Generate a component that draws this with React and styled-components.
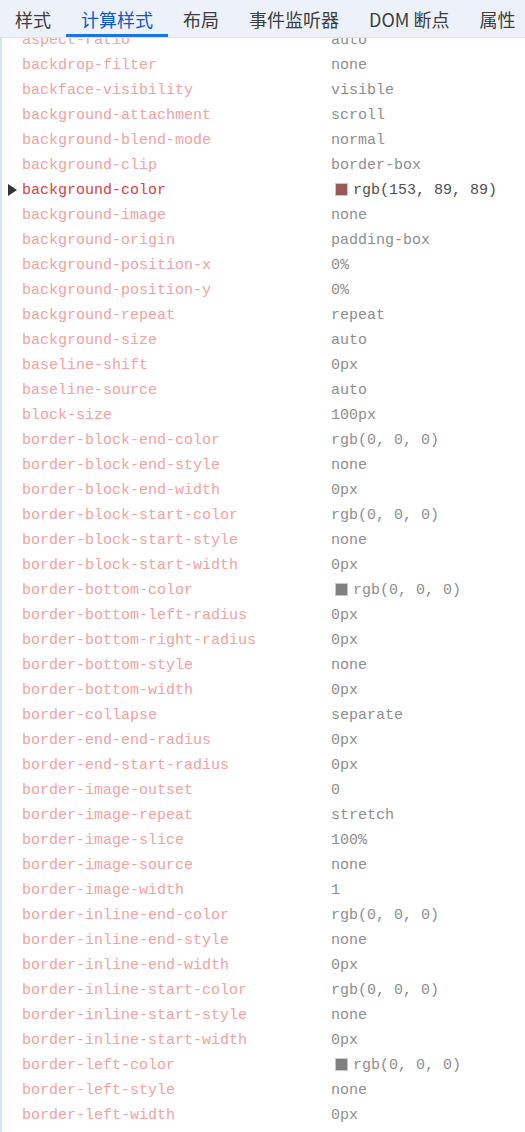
import React from 'react';
import styled, { createGlobalStyle } from 'styled-components';

const GlobalStyle = createGlobalStyle`
    html, body {
        margin: 0;
        padding: 0;
        background: #ffffff;
        overflow: hidden;
    }
`;

const tabs = ['样式', '计算样式', '布局', '事件监听器', 'DOM 断点', '属性'];

// [name, value, swatch color, expanded]
const props = [
    ['aspect-ratio', 'auto'],
    ['backdrop-filter', 'none'],
    ['backface-visibility', 'visible'],
    ['background-attachment', 'scroll'],
    ['background-blend-mode', 'normal'],
    ['background-clip', 'border-box'],
    ['background-color', 'rgb(153, 89, 89)', 'rgb(153, 89, 89)', true],
    ['background-image', 'none'],
    ['background-origin', 'padding-box'],
    ['background-position-x', '0%'],
    ['background-position-y', '0%'],
    ['background-repeat', 'repeat'],
    ['background-size', 'auto'],
    ['baseline-shift', '0px'],
    ['baseline-source', 'auto'],
    ['block-size', '100px'],
    ['border-block-end-color', 'rgb(0, 0, 0)'],
    ['border-block-end-style', 'none'],
    ['border-block-end-width', '0px'],
    ['border-block-start-color', 'rgb(0, 0, 0)'],
    ['border-block-start-style', 'none'],
    ['border-block-start-width', '0px'],
    ['border-bottom-color', 'rgb(0, 0, 0)', '#808080'],
    ['border-bottom-left-radius', '0px'],
    ['border-bottom-right-radius', '0px'],
    ['border-bottom-style', 'none'],
    ['border-bottom-width', '0px'],
    ['border-collapse', 'separate'],
    ['border-end-end-radius', '0px'],
    ['border-end-start-radius', '0px'],
    ['border-image-outset', '0'],
    ['border-image-repeat', 'stretch'],
    ['border-image-slice', '100%'],
    ['border-image-source', 'none'],
    ['border-image-width', '1'],
    ['border-inline-end-color', 'rgb(0, 0, 0)'],
    ['border-inline-end-style', 'none'],
    ['border-inline-end-width', '0px'],
    ['border-inline-start-color', 'rgb(0, 0, 0)'],
    ['border-inline-start-style', 'none'],
    ['border-inline-start-width', '0px'],
    ['border-left-color', 'rgb(0, 0, 0)', '#808080'],
    ['border-left-style', 'none'],
    ['border-left-width', '0px'],
    ['border-right-color', 'rgb(0, 0, 0)', '#808080'],
    ['border-right-style', 'none'],
];

export default function App() {
    return (
        <>
            <GlobalStyle />
            <Panel>
                <TabBar>
                    {tabs.map((t, i) => (
                        <Tab key={t} $active={i === 1}>
                            {t}
                        </Tab>
                    ))}
                </TabBar>
                <Viewport>
                    <List>
                        {props.map(([name, value, swatch, open]) => (
                            <Row key={name}>
                                <Toggle>{open && <Triangle />}</Toggle>
                                <Name $open={open}>{name}</Name>
                                <Value $open={open}>
                                    {swatch && <Swatch style={{ background: swatch }} />}
                                    {value}
                                </Value>
                            </Row>
                        ))}
                    </List>
                </Viewport>
            </Panel>
        </>
    );
}

const Panel = styled.div`
    display: flex;
    flex-direction: column;
    width: 525px;
    height: 1132px;
    overflow: hidden;
`;

const TabBar = styled.div`
    display: flex;
    align-items: stretch;
    height: 37px;
    flex-shrink: 0;
    background-color: #edf2fa;
    border-bottom: 1px solid #d3e3fd;
    white-space: nowrap;
`;

const Tab = styled.div`
    display: flex;
    align-items: center;
    padding: 0 15px;
    font-family: 'Noto Sans CJK SC', 'Noto Sans', sans-serif;
    font-size: 18px;
    color: ${(p) => (p.$active ? '#0b57d0' : '#3c3c3c')};
    box-shadow: ${(p) => (p.$active ? 'inset 0 -3px 0 #1a73e8' : 'none')};
`;

const Viewport = styled.div`
    flex: 1;
    overflow: hidden;
    border-left: 2px solid #d3e3fd;
`;

const List = styled.div`
    margin-top: -10px;
`;

const Row = styled.div`
    display: flex;
    align-items: center;
    height: 25px;
    padding-left: 6px;
    font-family: 'Liberation Mono', 'DejaVu Sans Mono', monospace;
    font-size: 15px;
    white-space: nowrap;
`;

const Toggle = styled.span`
    display: flex;
    align-items: center;
    width: 14px;
    height: 25px;
`;

const Triangle = styled.span`
    width: 0;
    height: 0;
    border-top: 6px solid transparent;
    border-bottom: 6px solid transparent;
    border-left: 9px solid #333333;
    margin-top: -2px;
`;

const Name = styled.span`
    width: 309px;
    color: ${(p) => (p.$open ? '#e33a3f' : '#f3a1a1')};
`;

const Value = styled.span`
    display: flex;
    align-items: center;
    color: ${(p) => (p.$open ? '#505050' : '#8e8e8e')};
`;

const Swatch = styled.span`
    display: inline-block;
    box-sizing: border-box;
    width: 13px;
    height: 13px;
    margin: 0 5px 2px 4px;
    border: 1px solid #c8c8c8;
`;
